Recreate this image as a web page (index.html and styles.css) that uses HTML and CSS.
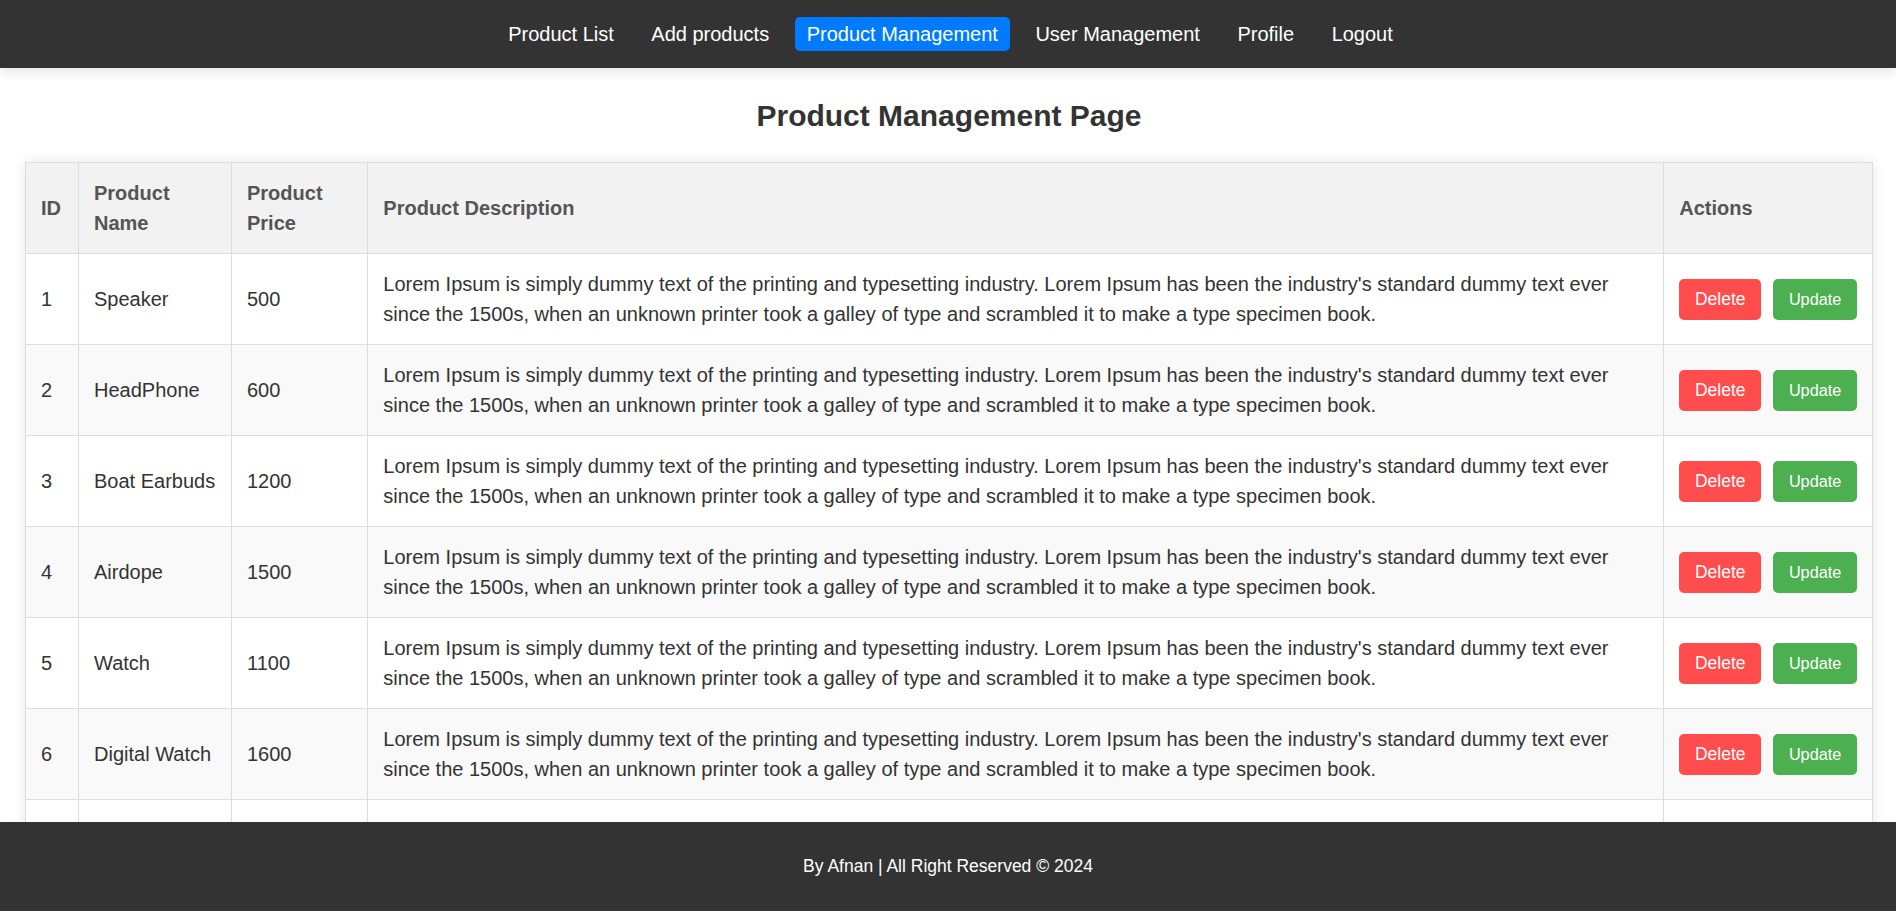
FILE: index.html
```html
<!DOCTYPE html>
<html lang="en">
<head>
<meta charset="utf-8">
<title>Product Management</title>
<link rel="stylesheet" href="styles.css">
</head>
<body>
<nav class="navbar">
  <a class="nav-link" href="#">Product List</a>
  <a class="nav-link" href="#">Add products</a>
  <a class="nav-link active" href="#">Product Management</a>
  <a class="nav-link" href="#">User Management</a>
  <a class="nav-link" href="#">Profile</a>
  <a class="nav-link" href="#">Logout</a>
</nav>

<main class="content">
  <h2 class="page-title">Product Management Page</h2>
  <table class="product-table">
    <thead>
      <tr>
        <th class="col-id">ID</th>
        <th>Product Name</th>
        <th>Product Price</th>
        <th>Product Description</th>
        <th>Actions</th>
      </tr>
    </thead>
    <tbody>
      <tr>
        <td>1</td><td>Speaker</td><td>500</td>
        <td>Lorem Ipsum is simply dummy text of the printing and typesetting industry. Lorem Ipsum has been the industry's standard dummy text ever since the 1500s, when an unknown printer took a galley of type and scrambled it to make a type specimen book.</td>
        <td><div class="actions"><button class="btn btn-delete">Delete</button><button class="btn btn-update">Update</button></div></td>
      </tr>
      <tr>
        <td>2</td><td>HeadPhone</td><td>600</td>
        <td>Lorem Ipsum is simply dummy text of the printing and typesetting industry. Lorem Ipsum has been the industry's standard dummy text ever since the 1500s, when an unknown printer took a galley of type and scrambled it to make a type specimen book.</td>
        <td><div class="actions"><button class="btn btn-delete">Delete</button><button class="btn btn-update">Update</button></div></td>
      </tr>
      <tr>
        <td>3</td><td>Boat Earbuds</td><td>1200</td>
        <td>Lorem Ipsum is simply dummy text of the printing and typesetting industry. Lorem Ipsum has been the industry's standard dummy text ever since the 1500s, when an unknown printer took a galley of type and scrambled it to make a type specimen book.</td>
        <td><div class="actions"><button class="btn btn-delete">Delete</button><button class="btn btn-update">Update</button></div></td>
      </tr>
      <tr>
        <td>4</td><td>Airdope</td><td>1500</td>
        <td>Lorem Ipsum is simply dummy text of the printing and typesetting industry. Lorem Ipsum has been the industry's standard dummy text ever since the 1500s, when an unknown printer took a galley of type and scrambled it to make a type specimen book.</td>
        <td><div class="actions"><button class="btn btn-delete">Delete</button><button class="btn btn-update">Update</button></div></td>
      </tr>
      <tr>
        <td>5</td><td>Watch</td><td>1100</td>
        <td>Lorem Ipsum is simply dummy text of the printing and typesetting industry. Lorem Ipsum has been the industry's standard dummy text ever since the 1500s, when an unknown printer took a galley of type and scrambled it to make a type specimen book.</td>
        <td><div class="actions"><button class="btn btn-delete">Delete</button><button class="btn btn-update">Update</button></div></td>
      </tr>
      <tr>
        <td>6</td><td>Digital Watch</td><td>1600</td>
        <td>Lorem Ipsum is simply dummy text of the printing and typesetting industry. Lorem Ipsum has been the industry's standard dummy text ever since the 1500s, when an unknown printer took a galley of type and scrambled it to make a type specimen book.</td>
        <td><div class="actions"><button class="btn btn-delete">Delete</button><button class="btn btn-update">Update</button></div></td>
      </tr>
      <tr class="row-partial">
        <td></td><td></td><td></td><td></td><td></td>
      </tr>
    </tbody>
  </table>
</main>

<footer class="footer">By Afnan | All Right Reserved © 2024</footer>
</body>
</html>
```

FILE: styles.css
```css
html,
body {
  height: 100%;
}

body {
  margin: 0;
  font-family: "Liberation Sans", Arial, sans-serif;
  color: #333;
  background: #fff;
  display: flex;
  flex-direction: column;
  overflow: hidden;
}

.navbar {
  flex: none;
  height: 68px;
  background: #333;
  display: flex;
  justify-content: center;
  align-items: center;
  gap: 13.5px;
  padding-left: 5px;
  box-shadow: 0 3px 12px rgba(0, 0, 0, 0.12);
  position: relative;
  z-index: 2;
}

.nav-link {
  color: #fff;
  text-decoration: none;
  font-size: 20px;
  line-height: 24px;
  padding: 5px 12px;
  border-radius: 5px;
}

.nav-link.active {
  background: #007bff;
}

.content {
  flex: 1;
  min-height: 0;
  overflow: hidden;
  padding: 0 23px 0 25px;
}

.page-title {
  margin: 31px 0 29px;
  text-align: center;
  font-size: 30px;
  font-weight: bold;
  color: #333;
}

.product-table {
  width: 100%;
  border-collapse: collapse;
  box-shadow: 0 0 12px rgba(0, 0, 0, 0.1);
  font-size: 20px;
  line-height: 30px;
}

.product-table th,
.product-table td {
  border: 1px solid #ddd;
  padding: 15px;
  text-align: left;
  vertical-align: middle;
}

.product-table th {
  background: #f2f2f2;
  color: #555;
  font-weight: bold;
}

.product-table .col-id {
  width: 22px;
}

.product-table tbody tr:nth-child(even) {
  background: #f9f9f9;
}

.product-table .row-partial td {
  height: 60px;
}

.actions {
  display: flex;
  gap: 12px;
}

.btn {
  border: none;
  border-radius: 5px;
  color: #fff;
  font-family: "Liberation Sans", Arial, sans-serif;
  line-height: 21px;
  padding: 10px 15.7px;
  cursor: pointer;
  white-space: nowrap;
}

.btn-delete {
  background: #ff4d4d;
  font-size: 17.5px;
}

.btn-update {
  background: #4caf50;
  font-size: 16.25px;
}

.footer {
  flex: none;
  height: 89px;
  background: #333;
  color: #fff;
  font-size: 17.5px;
  display: flex;
  align-items: center;
  justify-content: center;
}
```
